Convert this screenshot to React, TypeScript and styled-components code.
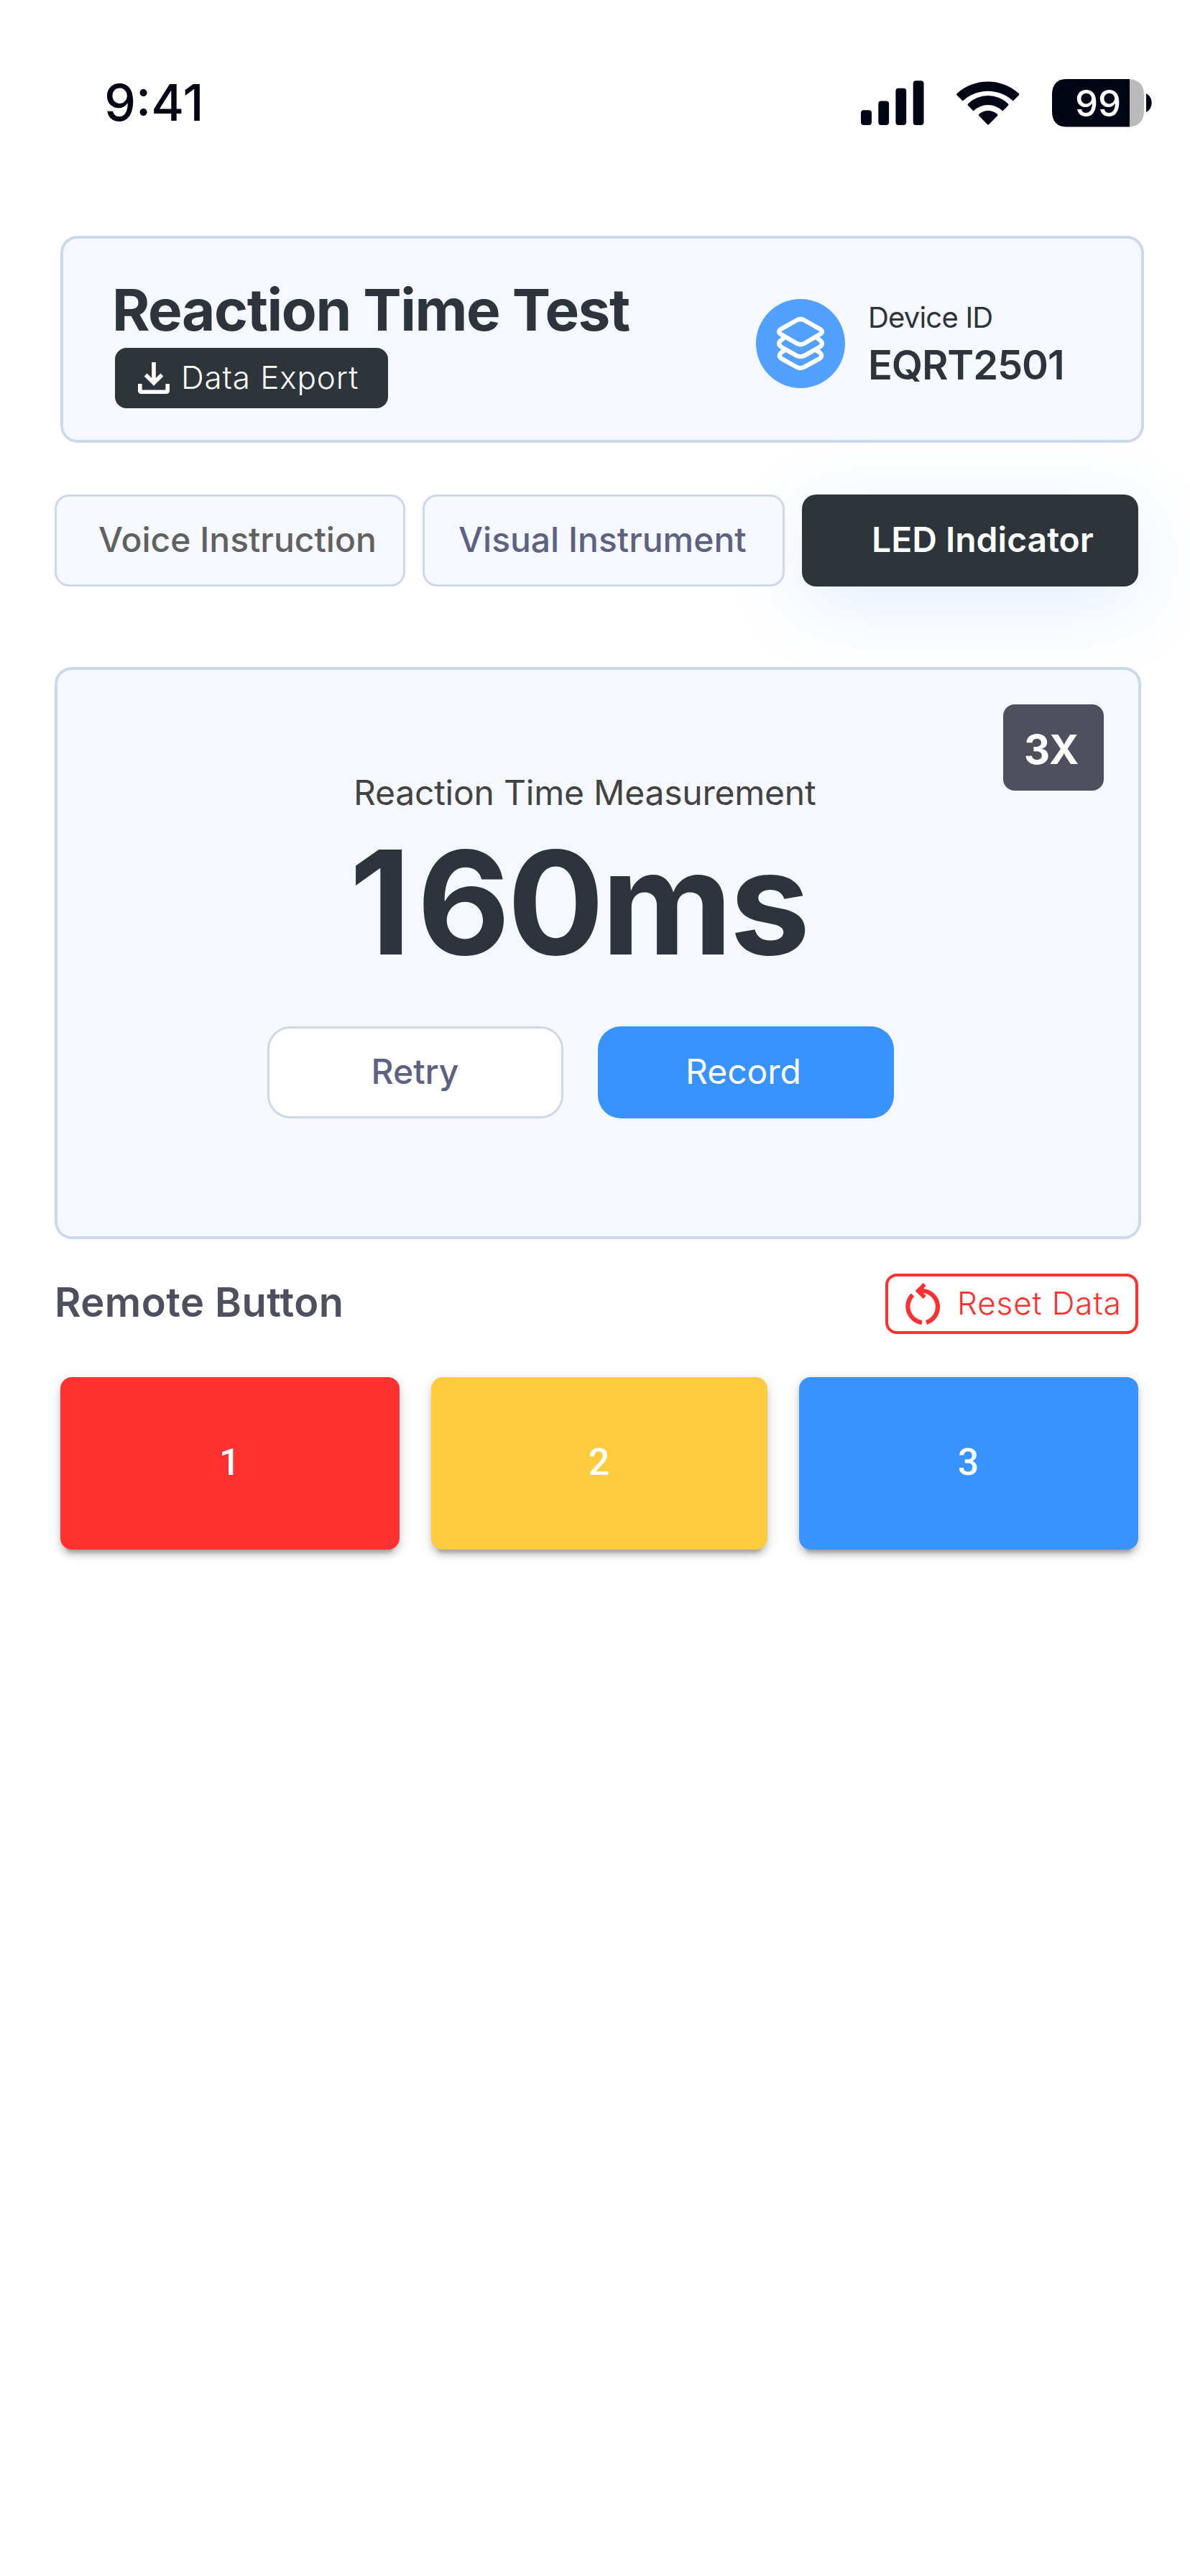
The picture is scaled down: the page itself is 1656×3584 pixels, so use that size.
import React from 'react';
import styled, { createGlobalStyle } from 'styled-components';

const Global = createGlobalStyle`
  * { box-sizing: border-box; }
  body { margin: 0; background: #fff; font-family: Inter, "Liberation Sans", sans-serif; }
  button { font-family: inherit; border: 0; padding: 0; }
  svg { display: block; flex: none; }
`;

const Screen = styled.main`
  width: 1656px;
  height: 3584px;
  background: #fff;
  overflow: hidden;
  display: flex;
  flex-direction: column;
`;

const StatusBar = styled.div`
  height: 328px;
  padding: 104px 52px 0 145px;
  display: flex;
  align-items: flex-start;
  color: #000413;
`;

const Clock = styled.time`
  flex: 1;
  height: 80px;
  font-size: 70px;
  line-height: 78px;
  font-weight: 500;
`;

const HeaderCard = styled.header`
  flex: none;
  width: 1508px;
  height: 288px;
  margin-left: 84px;
  padding: 56px 0 0 72px;
  border: 4px solid #cbd9e9;
  border-radius: 24px;
  background: #f5f8ff;
  display: flex;
`;

const TitleBlock = styled.div`
  width: 892px;
`;

const Title = styled.h1`
  margin: 0 0 0 -4px;
  height: 96px;
  line-height: 86px;
  font-size: 80px;
  font-weight: 700;
  letter-spacing: -1.45px;
  color: #2d343c;
  white-space: nowrap;
`;

const ExportButton = styled.button`
  width: 380px;
  height: 84px;
  padding-left: 32px;
  border-radius: 16px;
  background: #2d343a;
  color: #fff;
  display: flex;
  align-items: center;
  gap: 16px;
`;

const SmallLabel = styled.span`
  padding-bottom: 3px;
  font-size: 44px;
  font-weight: 300;
  letter-spacing: 0.02em;
  white-space: nowrap;
`;

const Device = styled.div`
  display: flex;
  gap: 32px;
  padding-top: 28px;
`;

const DeviceIcon = styled.div`
  width: 124px;
  height: 124px;
  border-radius: 50%;
  background: #52a0ff;
`;

const DeviceText = styled.div`
  color: #2d343c;
  white-space: nowrap;
`;

const DeviceLabel = styled.div`
  height: 56px;
  line-height: 52px;
  font-size: 40px;
  letter-spacing: -0.02em;
`;

const DeviceId = styled.div`
  line-height: 72px;
  font-size: 56px;
  font-weight: 600;
  letter-spacing: -0.02em;
`;

const Tabs = styled.nav`
  flex: none;
  height: 128px;
  margin: 72px 72px 0 76px;
  display: flex;
  gap: 24px;
`;

const Tab = styled.button<{ $width: number; $inset: number; $color: string; $active?: boolean }>`
  position: relative;
  z-index: ${p => (p.$active ? 0 : 1)};
  width: ${p => p.$width}px;
  padding: 0 0 3px ${p => p.$inset}px;
  border-radius: 20px;
  text-align: left;
  font-size: 48px;
  font-weight: ${p => (p.$active ? 600 : 500)};
  line-height: 60px;
  white-space: nowrap;
  color: ${p => p.$color};
  background: ${p => (p.$active ? '#2d343a' : '#f5f8ff')};
  border: ${p => (p.$active ? '0' : '3px solid #cbd9e9')};
  box-shadow: ${p => (p.$active ? '0 24px 110px rgba(70, 125, 255, 0.15)' : 'none')};
`;

const ResultCard = styled.section`
  flex: none;
  position: relative;
  width: 1512px;
  height: 796px;
  margin: 112px 0 0 76px;
  border: 4px solid #cbd9e9;
  border-radius: 24px;
  background: #f5f8ff;
`;

const Multiplier = styled.span`
  position: absolute;
  top: 48px;
  right: 48px;
  width: 140px;
  height: 120px;
  padding-left: 29px;
  border-radius: 16px;
  background: #4e515d;
  color: #fff;
  font-size: 56px;
  font-weight: 700;
  line-height: 127px;
`;

const ResultLabel = styled.div`
  margin: 141px 0 0 412px;
  height: 61px;
  line-height: 60px;
  font-size: 48px;
  letter-spacing: -0.22px;
  color: #434343;
  white-space: nowrap;
`;

const ResultValue = styled.div`
  margin-left: 406px;
  height: 240px;
  line-height: 242px;
  font-size: 200px;
  font-weight: 700;
  letter-spacing: -0.02em;
  color: #2d343c;
  white-space: nowrap;
`;

const LeadDigit = styled.span`
  letter-spacing: 0.04em;
`;

const Actions = styled.div`
  display: flex;
  gap: 48px;
  margin: 54px 0 0 292px;
`;

const Action = styled.button<{ $primary?: boolean }>`
  width: 412px;
  height: 128px;
  border-radius: 32px;
  border: ${p => (p.$primary ? '0' : '3px solid #cbd9e9')};
  background: ${p => (p.$primary ? '#3893ff' : '#fff')};
  color: ${p => (p.$primary ? '#fff' : '#5e6282')};
  font-size: 48px;
  font-weight: ${p => (p.$primary ? 400 : 500)};
  padding: 0 ${p => (p.$primary ? 7 : 1)}px 3px 0;
`;

const RemoteHeader = styled.div`
  flex: none;
  height: 84px;
  margin: 48px 72px 0 76px;
  display: flex;
  justify-content: space-between;
`;

const RemoteTitle = styled.h2`
  margin: 0;
  font-size: 56px;
  line-height: 81px;
  font-weight: 600;
  letter-spacing: 0.45px;
  color: #4e515d;
`;

const ResetButton = styled.button`
  width: 352px;
  height: 84px;
  border: 4px solid #ff3131;
  border-radius: 16px;
  background: transparent;
  color: #ff3131;
  padding-left: 24px;
  display: flex;
  align-items: center;
  gap: 20px;
`;

const RemoteRow = styled.div`
  flex: none;
  height: 240px;
  margin: 60px 72px 0 84px;
  display: flex;
  justify-content: space-between;
`;

const RemoteKey = styled.button<{ $bg: string; $width: number }>`
  width: ${p => p.$width}px;
  border-radius: 16px;
  background: ${p => p.$bg};
  color: #fff;
  font-family: Roboto, sans-serif;
  font-size: 52px;
  font-weight: 500;
  padding: 0 1px 3px 0;
  box-shadow: 0 4px 20px rgba(0, 0, 0, 0.12), 0 8px 8px rgba(0, 0, 0, 0.14), 0 12px 4px -8px rgba(0, 0, 0, 0.2);
`;

const StatusIcons = () => (
  <svg width="412" height="80" viewBox="1192 104 412 80" fill="#000413">
    <rect x="1198" y="153.3" width="15" height="20.7" rx="4" />
    <rect x="1222.3" y="140.6" width="14.8" height="33.4" rx="4" />
    <rect x="1246.4" y="122.7" width="14.8" height="51.3" rx="4" />
    <rect x="1270.7" y="112.3" width="14.8" height="61.7" rx="4" />
    <path d="M1331.6 130.2 A64 64 0 0 1 1417.8 130.2 Q1418.8 131.4 1417.8 132.6 L1409.8 140.6 A51 51 0 0 0 1339.8 140.6 L1331.6 132.6 Q1330.6 131.4 1331.6 130.2Z" />
    <path d="M1347 144.4 A40 40 0 0 1 1403 144.4 Q1404 145.6 1403 146.8 L1395.2 154.4 A29 29 0 0 0 1354.6 154.4 L1347 146.8 Q1346 145.6 1347 144.4Z" />
    <path d="M1362.4 158.8 A19 19 0 0 1 1387.8 158.8 Q1389 160 1387.8 161.2 L1376.2 173 Q1375.1 174 1374 173 L1362.4 161.2 Q1361.2 160 1362.4 158.8Z" />
    <path d="M1572 110V176.6H1485Q1464 176.6 1464 155V131.6Q1464 110 1485 110Z" />
    <path d="M1572 110Q1592 112 1592 132V154.6Q1592 174.6 1572 176.6Z" fill="#bababa" />
    <path d="M1595 130Q1602.7 134 1602.7 143T1595 156Z" />
    <text x="1496" y="162.3" fontFamily="Inter, sans-serif" fontSize="51" fontWeight="500" fill="#fff">99</text>
  </svg>
);

const DownloadIcon = () => (
  <svg width="44" height="44" viewBox="0 0 44 44" fill="none" stroke="#fff" strokeWidth="5.6">
    <path d="M22 0V28M10.6 17.4L22 28.7L33.4 17.4" />
    <path d="M2.8 30V39.2Q2.8 41.2 4.8 41.2H39.2Q41.2 41.2 41.2 39.2V30" />
  </svg>
);

const LayersIcon = () => (
  <svg width="124" height="124" viewBox="0 0 124 124" fill="none" stroke="#fff" strokeWidth="6.2" strokeLinejoin="round">
    <path d="M56.5 29.6Q62 26.4 67.5 29.6L88 41.3Q96 45.5 88 49.8L67.5 61.6Q62 64.9 56.5 61.6L36 49.8Q28 45.5 36 41.3Z" />
    <path d="M39 54.5L36 56.5Q28 62.3 36 67.2L56.5 78.7Q62 81.6 67.5 78.7L88 67.2Q96 62.3 88 56.5L85 54.5" />
    <path d="M40 71.3L36.5 73.6Q29 79 36.5 83.5L56.5 94.6Q62 97.5 67.5 94.6L87.5 83.5Q95 79 87.5 73.6L84 71.3" />
  </svg>
);

const ResetIcon = () => (
  <svg width="52" height="60" viewBox="0 0 52 60">
    <path d="M23 56A22.6 22.6 0 0 1 10 17.6" fill="none" stroke="#ff3131" strokeWidth="6.2" />
    <path d="M29 56A22.6 22.6 0 0 0 25.5 12H21" fill="none" stroke="#ff3131" strokeWidth="6.2" />
    <path d="M13.7 12L24.7 1L28.8 5.1L21.9 12L28.8 18.9L24.7 23Z" fill="#ff3131" />
  </svg>
);

const keys = [
  { label: '1', color: '#ff3131', width: 472 },
  { label: '2', color: '#ffcc40', width: 468 },
  { label: '3', color: '#3893ff', width: 472 },
];

export default function App() {
  return (
    <>
      <Global />
      <Screen>
        <StatusBar>
          <Clock>9:41</Clock>
          <StatusIcons />
        </StatusBar>
        <HeaderCard>
          <TitleBlock>
            <Title>Reaction Time Test</Title>
            <ExportButton><DownloadIcon /><SmallLabel>Data Export</SmallLabel></ExportButton>
          </TitleBlock>
          <Device>
            <DeviceIcon><LayersIcon /></DeviceIcon>
            <DeviceText>
              <DeviceLabel>Device ID</DeviceLabel>
              <DeviceId>EQRT2501</DeviceId>
            </DeviceText>
          </Device>
        </HeaderCard>
        <Tabs>
          <Tab $width={488} $inset={58} $color="#616161">Voice Instruction</Tab>
          <Tab $width={504} $inset={47} $color="#5e6282">Visual Instrument</Tab>
          <Tab $width={468} $inset={97} $color="#fff" $active>LED Indicator</Tab>
        </Tabs>
        <ResultCard>
          <Multiplier>3X</Multiplier>
          <ResultLabel>Reaction Time Measurement</ResultLabel>
          <ResultValue><LeadDigit>1</LeadDigit>60ms</ResultValue>
          <Actions>
            <Action>Retry</Action>
            <Action $primary>Record</Action>
          </Actions>
        </ResultCard>
        <RemoteHeader>
          <RemoteTitle>Remote Button</RemoteTitle>
          <ResetButton><ResetIcon /><SmallLabel>Reset Data</SmallLabel></ResetButton>
        </RemoteHeader>
        <RemoteRow>
          {keys.map(k => (
            <RemoteKey key={k.label} $bg={k.color} $width={k.width}>{k.label}</RemoteKey>
          ))}
        </RemoteRow>
      </Screen>
    </>
  );
}
